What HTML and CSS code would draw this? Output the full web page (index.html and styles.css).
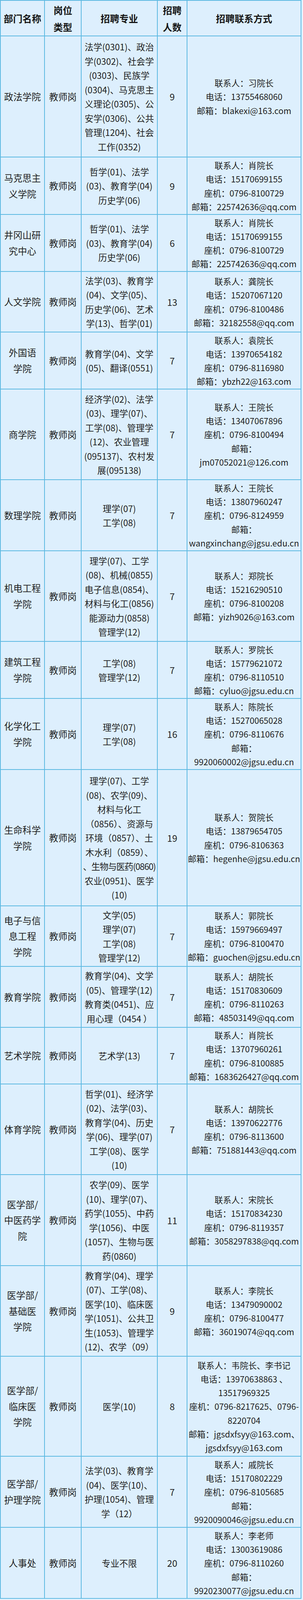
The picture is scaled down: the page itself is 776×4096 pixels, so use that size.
FILE: index.html
```html
<!DOCTYPE html>
<html lang="zh-CN">
<head>
<meta charset="utf-8">
<title>招聘岗位表</title>
<link rel="stylesheet" href="styles.css">
</head>
<body>
<table class="jobs">
  <colgroup>
    <col class="c-dept">
    <col class="c-type">
    <col class="c-major">
    <col class="c-num">
    <col class="c-contact">
  </colgroup>
  <thead>
    <tr>
      <th>部门名称</th>
      <th>岗位<br>类型</th>
      <th>招聘专业</th>
      <th>招聘<br>人数</th>
      <th>招聘联系方式</th>
    </tr>
  </thead>
  <tbody>
    <tr>
      <td class="dept">政法学院</td>
      <td class="type">教师岗</td>
      <td class="major">法学(0301)、政治<br>学(0302)、社会学<br>(0303)、民族学<br>(0304)、马克思主<br>义理论(0305)、公<br>安学(0306)、公共<br>管理(1204)、社会<br>工作(0352)</td>
      <td class="num">9</td>
      <td class="contact">联系人：习院长<br>电话：13755468060<br>邮箱：blakexi@163.com</td>
    </tr>
    <tr>
      <td class="dept">马克思主<br>义学院</td>
      <td class="type">教师岗</td>
      <td class="major">哲学(01)、法学<br>(03)、教育学(04)<br>历史学(06)</td>
      <td class="num">9</td>
      <td class="contact">联系人：肖院长<br>电话：15170699155<br>座机：0796-8100729<br>邮箱：225742636@qq.com</td>
    </tr>
    <tr>
      <td class="dept">井冈山研<br>究中心</td>
      <td class="type">教师岗</td>
      <td class="major">哲学(01)、法学<br>(03)、教育学(04)<br>历史学(06)</td>
      <td class="num">6</td>
      <td class="contact">联系人：肖院长<br>电话：15170699155<br>座机：0796-8100729<br>邮箱：225742636@qq.com</td>
    </tr>
    <tr>
      <td class="dept">人文学院</td>
      <td class="type">教师岗</td>
      <td class="major">法学(03)、教育学<br>(04)、文学(05)、<br>历史学(06)、艺术<br>学(13)、哲学(01)</td>
      <td class="num">13</td>
      <td class="contact">联系人：龚院长<br>电话：15207067120<br>座机：0796-8100486<br>邮箱：32182558@qq.com</td>
    </tr>
    <tr>
      <td class="dept">外国语<br>学院</td>
      <td class="type">教师岗</td>
      <td class="major">教育学(04)、文学<br>(05)、翻译(0551)</td>
      <td class="num">7</td>
      <td class="contact">联系人：袁院长<br>电话：13970654182<br>座机：0796-8116980<br>邮箱：ybzh22@163.com</td>
    </tr>
    <tr>
      <td class="dept">商学院</td>
      <td class="type">教师岗</td>
      <td class="major">经济学(02)、法学<br>(03)、理学(07)、<br>工学(08)、管理学<br>(12)、农业管理<br>(095137)、农村发<br>展(095138)</td>
      <td class="num">7</td>
      <td class="contact">联系人：王院长<br>电话：13407067896<br>座机：0796-8100494<br>邮箱：<br>jm07052021@126.com</td>
    </tr>
    <tr>
      <td class="dept">数理学院</td>
      <td class="type">教师岗</td>
      <td class="major">理学(07)<br>工学(08)</td>
      <td class="num">7</td>
      <td class="contact">联系人：王院长<br>电话：13807960247<br>座机：0796-8124959<br>邮箱：<br>wangxinchang@jgsu.edu.cn</td>
    </tr>
    <tr>
      <td class="dept">机电工程<br>学院</td>
      <td class="type">教师岗</td>
      <td class="major">理学(07)、工学<br>(08)、机械(0855)<br>电子信息(0854)、<br>材料与化工(0856)<br>能源动力(0858)<br>管理学(12)</td>
      <td class="num">7</td>
      <td class="contact">联系人：郑院长<br>电话：15216290510<br>座机：0796-8100208<br>邮箱：yizh9026@163.com</td>
    </tr>
    <tr>
      <td class="dept">建筑工程<br>学院</td>
      <td class="type">教师岗</td>
      <td class="major">工学(08)<br>管理学(12)</td>
      <td class="num">7</td>
      <td class="contact">联系人：罗院长<br>电话：15779621072<br>座机：0796-8110510<br>邮箱：cyluo@jgsu.edu.cn</td>
    </tr>
    <tr>
      <td class="dept">化学化工<br>学院</td>
      <td class="type">教师岗</td>
      <td class="major">理学(07)<br>工学(08)</td>
      <td class="num">16</td>
      <td class="contact">联系人：陈院长<br>电话：15270065028<br>座机：0796-8110676<br>邮箱：<br>9920060002@jgsu.edu.cn</td>
    </tr>
    <tr>
      <td class="dept">生命科学<br>学院</td>
      <td class="type">教师岗</td>
      <td class="major">理学(07)、工学<br>(08)、农学(09)、<br>材料与化工<br>（0856）、资源与<br>环境（0857）、土<br>木水利（0859）、<br><span class="tight">、生物与医药(0860)</span><br>农业(0951)、医学<br>(10)</td>
      <td class="num">19</td>
      <td class="contact">联系人：贺院长<br>电话：13879654705<br>座机：0796-8106363<br>邮箱：hegenhe@jgsu.edu.cn</td>
    </tr>
    <tr>
      <td class="dept">电子与信<br>息工程<br>学院</td>
      <td class="type">教师岗</td>
      <td class="major">文学(05)<br>理学(07)<br>工学(08)<br>管理学(12)</td>
      <td class="num">7</td>
      <td class="contact">联系人：郭院长<br>电话：15979669497<br>座机：0796-8100470<br>邮箱：guochen@jgsu.edu.cn</td>
    </tr>
    <tr>
      <td class="dept">教育学院</td>
      <td class="type">教师岗</td>
      <td class="major">教育学(04)、文学<br>(05)、管理学(12)<br>教育类(0451)、应<br>用心理（0454 ）</td>
      <td class="num">7</td>
      <td class="contact">联系人：胡院长<br>电话：15170830609<br>座机：0796-8110263<br>邮箱：48503149@qq.com</td>
    </tr>
    <tr>
      <td class="dept">艺术学院</td>
      <td class="type">教师岗</td>
      <td class="major">艺术学(13)</td>
      <td class="num">7</td>
      <td class="contact">联系人：肖院长<br>电话：13707960261<br>座机：0796-8100885<br>邮箱：1683626427@qq.com</td>
    </tr>
    <tr>
      <td class="dept">体育学院</td>
      <td class="type">教师岗</td>
      <td class="major">哲学(01)、经济学<br>(02)、法学(03)、<br>教育学(04)、历史<br>学(06)、理学(07)<br>工学(08)、医学<br>(10)</td>
      <td class="num">7</td>
      <td class="contact">联系人：胡院长<br>电话：13970622776<br>座机：0796-8113600<br>邮箱：751881443@qq.com</td>
    </tr>
    <tr>
      <td class="dept">医学部/<br>中医药学<br>院</td>
      <td class="type">教师岗</td>
      <td class="major">农学(09)、医学<br>(10)、理学(07)、<br>药学(1055)、中药<br>学(1056)、中医<br>(1057)、生物与医<br>药(0860)</td>
      <td class="num">11</td>
      <td class="contact">联系人：宋院长<br>电话：15170834230<br>座机：0796-8119357<br>邮箱：3058297838@qq.com</td>
    </tr>
    <tr>
      <td class="dept">医学部/<br>基础医<br>学院</td>
      <td class="type">教师岗</td>
      <td class="major">教育学(04)、理学<br>(07)、工学(08)、<br>医学(10)、临床医<br>学(1051)、公共卫<br>生(1053)、管理学<br>(12)、农学（09）</td>
      <td class="num">9</td>
      <td class="contact">联系人：李院长<br>电话：13479090002<br>座机：0796-8100477<br>邮箱：36019074@qq.com</td>
    </tr>
    <tr>
      <td class="dept">医学部/<br>临床医<br>学院</td>
      <td class="type">教师岗</td>
      <td class="major">医学(10)</td>
      <td class="num">8</td>
      <td class="contact">联系人：韦院长、李书记<br>电话：13970638863 、<br>13517969325<br>座机：0796-8217625、0796-<br>8220704<br>邮箱：jgsdxfsyy@163.com、<br>jgsdxfsyy@163.com</td>
    </tr>
    <tr>
      <td class="dept">医学部/<br>护理学院</td>
      <td class="type">教师岗</td>
      <td class="major">法学(03)、教育学<br>(04)、医学(10)、<br>护理(1054)、管理<br>学（12）</td>
      <td class="num">7</td>
      <td class="contact">联系人：戚院长<br>电话：15170802229<br>座机：0796-8105685<br>邮箱：<br>9920090046@jgsu.edu.cn</td>
    </tr>
    <tr>
      <td class="dept">人事处</td>
      <td class="type">教师岗</td>
      <td class="major">专业不限</td>
      <td class="num">20</td>
      <td class="contact">联系人：李老师<br>电话：13003619086<br>座机：0796-8110260<br>邮箱：<br>9920230077@jgsu.edu.cn</td>
    </tr>
  </tbody>
</table>
</body>
</html>
```

FILE: styles.css
```css
html, body {
  margin: 0;
  padding: 0;
  background: #e3f2fd;
}

body {
  font-family: "Noto Sans CJK SC", "Noto Sans", sans-serif;
  color: #1f1f1f;
}

.jobs {
  border-collapse: collapse;
  table-layout: fixed;
  width: 770px;
  background: #ddeffd;
}

.c-dept { width: 113px; }
.c-type { width: 94px; }
.c-major { width: 195px; }
.c-num { width: 76px; }
.c-contact { width: 292px; }

.jobs th,
.jobs td {
  border: 2px solid #5db9e2;
  padding: 0 1px;
  text-align: center;
  vertical-align: middle;
  white-space: nowrap;
  overflow: visible;
}

.jobs th {
  font-weight: 700;
  font-size: 24px;
  line-height: 43px;
  color: #151515;
}

.jobs thead tr { height: 91px; }

.dept,
.type {
  font-size: 23.5px;
  line-height: 40.6px;
}

.num {
  font-size: 23.5px;
  line-height: 36px;
}

.major {
  font-size: 22.5px;
  line-height: 36.5px;
}

.contact {
  font-size: 21.6px;
  line-height: 35.2px;
}

.tight {
  letter-spacing: -1.2px;
}

.jobs tbody tr:nth-child(1) { height: 310px; }
.jobs tbody tr:nth-child(2) { height: 147px; }
.jobs tbody tr:nth-child(3) { height: 146px; }
.jobs tbody tr:nth-child(4) { height: 155px; }
.jobs tbody tr:nth-child(5) { height: 146px; }
.jobs tbody tr:nth-child(6) { height: 232px; }
.jobs tbody tr:nth-child(7) { height: 182px; }
.jobs tbody tr:nth-child(8) { height: 232px; }
.jobs tbody tr:nth-child(9) { height: 146px; }
.jobs tbody tr:nth-child(10) { height: 182px; }
.jobs tbody tr:nth-child(11) { height: 349px; }
.jobs tbody tr:nth-child(12) { height: 155px; }
.jobs tbody tr:nth-child(13) { height: 156px; }
.jobs tbody tr:nth-child(14) { height: 145px; }
.jobs tbody tr:nth-child(15) { height: 232px; }
.jobs tbody tr:nth-child(16) { height: 233px; }
.jobs tbody tr:nth-child(17) { height: 232px; }
.jobs tbody tr:nth-child(18) { height: 256px; }
.jobs tbody tr:nth-child(19) { height: 182px; }
.jobs tbody tr:nth-child(20) { height: 182px; }
```
